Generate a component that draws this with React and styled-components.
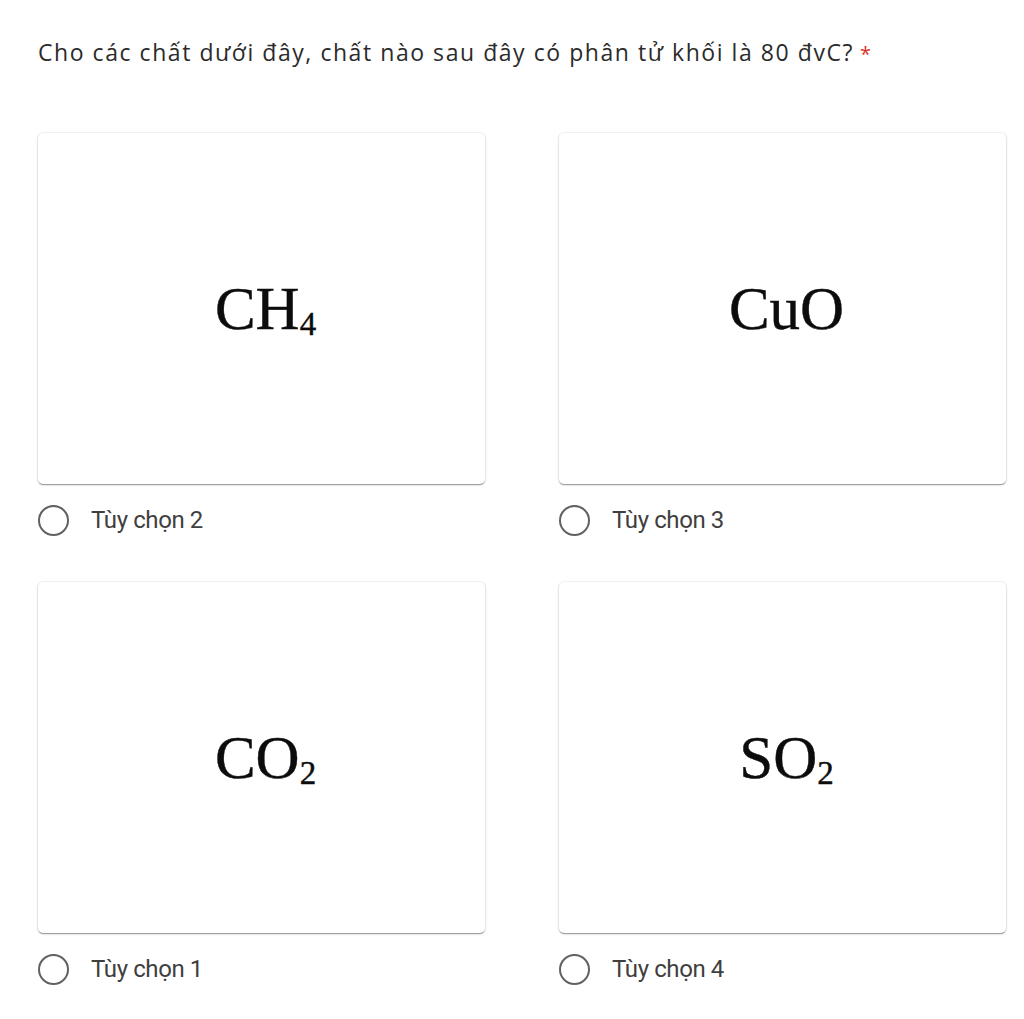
import React from "react";
import styled, { createGlobalStyle } from "styled-components";

const GlobalStyle = createGlobalStyle`
	html, body {
		margin: 0;
		padding: 0;
		background: #fff;
	}
`;

const options = [
	{ id: 2, base: "CH", sub: "4" },
	{ id: 3, base: "CuO", sub: null },
	{ id: 1, base: "CO", sub: "2" },
	{ id: 4, base: "SO", sub: "2" },
];

const App = () => {
	return (
		<Page>
			<GlobalStyle />
			<Question>
				Cho các chất dưới đây, chất nào sau đây có phân tử khối là 80 đvC?
				<Required>*</Required>
			</Question>
			<Grid>
				{options.map((opt) => (
					<Option key={opt.id}>
						<Card>
							<Formula>
								{opt.base}
								{opt.sub && <Sub>{opt.sub}</Sub>}
							</Formula>
						</Card>
						<Choice>
							<Radio />
							<Label>Tùy chọn {opt.id}</Label>
						</Choice>
					</Option>
				))}
			</Grid>
		</Page>
	);
};

export default App;

const Page = styled.div`
	width: 1024px;
	min-height: 1019px;
	box-sizing: border-box;
	padding: 36px 19px 0 38px;
`;

const Question = styled.div`
	font-family: "Open Sans", sans-serif;
	font-size: 23px;
	line-height: 32px;
	color: #2b2b2b;
	letter-spacing: 1.55px;
`;

const Required = styled.span`
	color: #d93025;
	margin-left: 6px;
	font-size: 20px;
	letter-spacing: 0;
`;

const Grid = styled.div`
	display: grid;
	grid-template-columns: 447px 447px;
	column-gap: 74px;
	row-gap: 46px;
	margin-top: 63px;
`;

const Option = styled.div`
	display: flex;
	flex-direction: column;
`;

const Card = styled.div`
	height: 351px;
	border-radius: 5px;
	background: #fff;
	box-shadow: 0 0 0 1px rgba(0, 0, 0, 0.04), 0 2px 1px -1px rgba(0, 0, 0, 0.2),
		0 1px 1px 0 rgba(0, 0, 0, 0.14), 0 1px 3px 0 rgba(0, 0, 0, 0.14);
	display: flex;
	align-items: center;
	justify-content: center;
`;

const Formula = styled.div`
	font-family: "Liberation Serif", "Times New Roman", serif;
	font-size: 61px;
	color: #0c0c0c;
	line-height: 1;
	margin: 0 0 0 8px;
	-webkit-text-stroke: 0.4px #0c0c0c;
`;

const Sub = styled.span`
	font-size: 33px;
	position: relative;
	top: 6px;
`;

const Choice = styled.div`
	display: flex;
	align-items: center;
	margin-top: 20px;
	height: 32px;
`;

const Radio = styled.span`
	width: 27px;
	height: 27px;
	border: 2.5px solid #616161;
	border-radius: 50%;
	flex-shrink: 0;
`;

const Label = styled.span`
	font-family: Roboto, sans-serif;
	font-size: 24px;
	color: #3f3f3f;
	margin-left: 22px;
	letter-spacing: -0.4px;
`;
